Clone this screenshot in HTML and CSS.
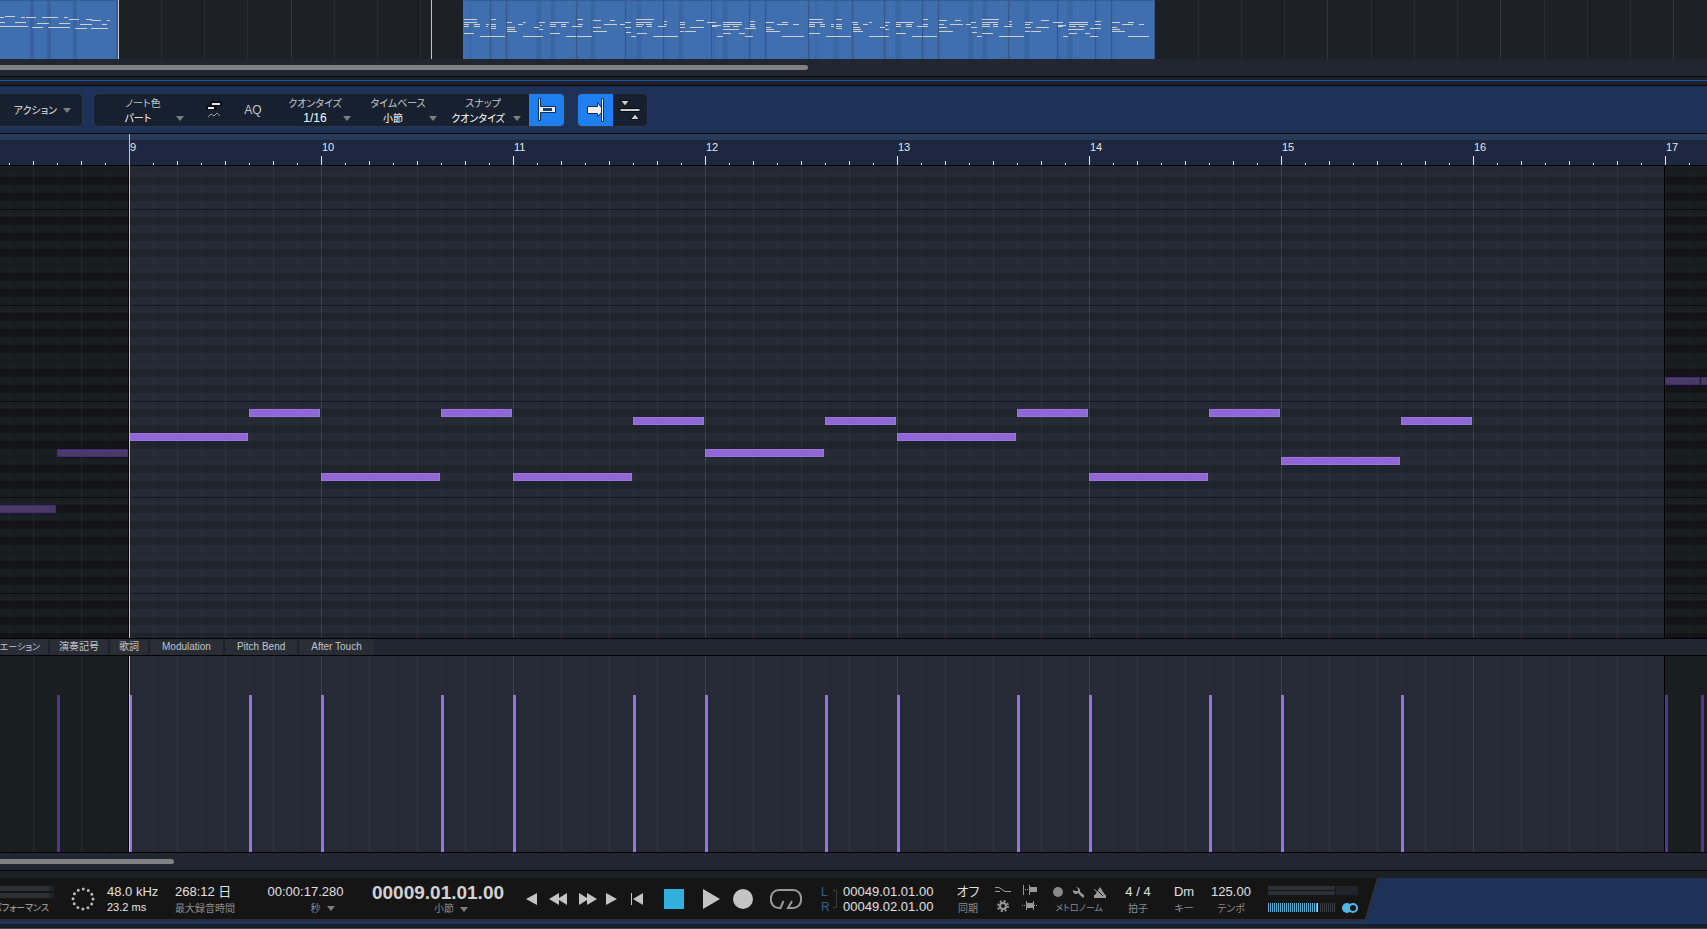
FILE: index.html
```html
<!DOCTYPE html>
<html lang="ja">
<head>
<meta charset="utf-8">
<title>ピアノロール</title>
<link rel="stylesheet" href="styles.css">
</head>
<body>
<section class="arrange" aria-label="アレンジ">
  <svg class="arrange-canvas" height="59" aria-hidden="true">
    <defs>
      <pattern id="beats" x="118" width="173" height="59" patternUnits="userSpaceOnUse">
        <path d="M43.5 0v59M86.5 0v59M129.5 0v59" stroke="#292c30"/><path d="M.5 0v59" stroke="#36383c"/>
      </pattern>
      <pattern id="beats-late" x="1154" width="173" height="59" patternUnits="userSpaceOnUse">
        <path d="M44.5 0v59M87.5 0v59M130.5 0v59" stroke="#292c30"/><path d="M.5 0v59" stroke="#36383c"/>
      </pattern>
    </defs>
    <rect width="600" height="59" fill="url(#beats)"/>
    <rect x="1150" width="100%" height="59" fill="url(#beats-late)"/>
    <rect width="118" height="59" fill="#406fb0"/>
    <path d="M32 0v59M49 0v59M75 0v59" stroke="#3863a0" stroke-width="4"/>
    <path d="M117 0v59" stroke="#355d96" stroke-width="2"/>
    <path d="M118.5 0v59M431.5 0v59" stroke="#c2c2c2"/>
    <rect x="463" width="692" height="59" fill="#406fb0"/>
    <path d="M470 0v59M491 0v59M507 0v59M577 0v59M626 0v59M631 0v59M664 0v59M714 0v59M750 0v59M766 0v59M809 0v59M816 0v59M853 0v59M885 0v59M923 0v59M939 0v59M1009 0v59M1058 0v59M1096 0v59M1112 0v59" stroke="#3c69a8" stroke-width="3"/>
    <path d="M539 0v59M553 0v59M593 0v59M639 0v59M681 0v59M725 0v59M836 0v59M898 0v59M971 0v59M985 0v59M1027 0v59M1070 0v59" stroke="#3a66a4" stroke-width="5"/>
    <path d="M490.5 0v59M506.5 0v59M576.5 0v59M625.5 0v59M663.5 0v59M711.5 0v59M749.5 0v59M765.5 0v59M808.5 0v59M852.5 0v59M884.5 0v59M922.5 0v59M938.5 0v59M1008.5 0v59M1057.5 0v59M1095.5 0v59M1111.5 0v59M1154.5 0v59" stroke="#355889"/>
    <path d="M0 .5h118M463 .5h692" stroke="#355d96"/>
    <g fill="none" stroke="#cfd0cc" stroke-width="3">
      <g transform="scale(.33333)">
        <path d="M15 49.5h30M0 52.5h12M63 52.5h12M78 52.5h30M126 52.5h48M192 52.5h12M207 58.5h30M258 58.5h18M273 61.5h30M321 61.5h9M0 67.5h15M45 67.5h33M111 70.5h36M177 70.5h33M240 73.5h36M306 73.5h15M0 79.5h84M96 82.5h33M144 82.5h66M225 85.5h36M273 85.5h51"/>
      </g>
      <g transform="translate(440) scale(.33333)">
        <path d="M72 58.5h39M153 58.5h15M411 58.5h18M588 58.5h54M459 61.5h24M510 61.5h15M768 61.5h24M672 64.5h9M930 64.5h15"/>
        <path d="M72 67.5h39M201 67.5h15M249 67.5h9M297 67.5h18M330 67.5h57M555 67.5h18M588 67.5h48M720 67.5h15M801 67.5h27M849 67.5h57M978 67.5h24M1026 67.5h18"/>
        <path d="M72 73.5h15M102 73.5h18M138 73.5h9M153 73.5h15M234 73.5h15M330 73.5h18M363 73.5h15M414 73.5h15M492 73.5h39M540 73.5h15M588 73.5h24M618 73.5h18M672 73.5h9M720 73.5h15M849 73.5h57M930 73.5h15M1011 73.5h33M1059 73.5h18"/>
        <path d="M300 76.5h6M816 76.5h27M72 79.5h15M102 79.5h18M138 79.5h6M153 79.5h15M330 79.5h18M363 79.5h15M396 79.5h30M588 79.5h18M621 79.5h15M654 79.5h24M816 79.5h15M849 79.5h21M879 79.5h18M930 79.5h15"/>
        <path d="M201 82.5h24M282 82.5h15M459 82.5h24M555 82.5h18M720 82.5h15M750 82.5h42M978 82.5h15M153 85.5h15M915 85.5h33M201 88.5h24M297 88.5h12M849 88.5h48M978 88.5h24"/>
        <path d="M201 94.5h30M459 94.5h42M720 94.5h12M735 94.5h33M978 94.5h42M558 97.5h15M72 100.5h30M330 100.5h30M591 100.5h30M849 100.5h24M897 100.5h18"/>
        <path d="M120 109.5h75M249 109.5h60M378 109.5h30M411 109.5h45M573 109.5h15M639 109.5h75M831 109.5h18M915 109.5h24M1026 109.5h66"/>
      </g>
      <g transform="translate(800) scale(.33333)">
        <path d="M27 58.5h42M108 58.5h18M369 58.5h15M546 58.5h51M417 61.5h24M465 61.5h18M723 61.5h24M627 64.5h9M885 64.5h18"/>
        <path d="M27 67.5h42M156 67.5h18M207 67.5h9M255 67.5h15M288 67.5h54M513 67.5h15M546 67.5h48M675 67.5h24M759 67.5h30M807 67.5h57M936 67.5h24M984 67.5h18"/>
        <path d="M27 73.5h18M60 73.5h15M93 73.5h9M108 73.5h18M159 73.5h15M189 73.5h15M288 73.5h15M318 73.5h18M369 73.5h15M417 73.5h15M450 73.5h39M498 73.5h15M546 73.5h24M579 73.5h15M627 73.5h9M675 73.5h15M807 73.5h57M885 73.5h18M966 73.5h33M1017 73.5h15"/>
        <path d="M255 76.5h9M774 76.5h24M27 79.5h18M60 79.5h15M93 79.5h9M108 79.5h18M288 79.5h15M318 79.5h18M351 79.5h33M546 79.5h24M579 79.5h15M612 79.5h24M774 79.5h15M807 79.5h21M837 79.5h18"/>
        <path d="M159 82.5h21M240 82.5h15M417 82.5h24M513 82.5h18M675 82.5h18M708 82.5h39M936 82.5h15M108 85.5h18M870 85.5h33M159 88.5h24M255 88.5h12M804 88.5h48M936 88.5h24"/>
        <path d="M159 94.5h30M417 94.5h42M675 94.5h15M693 94.5h30M936 94.5h39M516 97.5h15M27 100.5h33M288 100.5h30M546 100.5h33M807 100.5h24M855 100.5h15"/>
        <path d="M0 109.5h12M78 109.5h75M207 109.5h60M336 109.5h30M369 109.5h42M531 109.5h15M597 109.5h75M789 109.5h15M870 109.5h24M984 109.5h63"/>
      </g>
    </g>
  </svg>
  <div class="scrollbar"><div class="thumb thumb-arrange"></div></div>
</section>
<div class="splitter"></div>

<header class="toolbar">
  <div class="group group-action">
    <button class="action" type="button">アクション
      <svg class="caret" width="8" height="5" viewBox="0 0 8 5" aria-hidden="true"><path d="M0 0h8L4 5z"/></svg>
    </button>
  </div>
  <div class="group group-main">
    <div class="field">
      <label for="color">ノート色</label>
      <select id="color" class="value-left"><option>パート</option></select>
      <svg class="caret" width="8" height="5" viewBox="0 0 8 5" aria-hidden="true"><path d="M0 0h8L4 5z"/></svg>
    </div>
    <button class="tool" type="button" aria-label="ノート表示">
      <svg width="16" height="18" viewBox="0 0 16 18"><path d="M4 0h12v5h-5v4H0V4h4z" fill="#0b1018"/><path d="M6 3h8M2 7h6" stroke="#e4e4e4" stroke-width="2"/><path d="M2 16l3-3 3 2 3-3 3 3" fill="none" stroke="#9a9da0"/></svg>
    </button>
    <button class="tool aq" type="button">AQ</button>
    <div class="field">
      <label for="quantize">クオンタイズ</label>
      <select id="quantize" class="latin"><option>1/16</option></select>
      <svg class="caret" width="8" height="5" viewBox="0 0 8 5" aria-hidden="true"><path d="M0 0h8L4 5z"/></svg>
    </div>
    <div class="field field-left">
      <label for="timebase">タイムベース</label>
      <select id="timebase" class="value-left"><option>小節</option></select>
      <svg class="caret" width="8" height="5" viewBox="0 0 8 5" aria-hidden="true"><path d="M0 0h8L4 5z"/></svg>
    </div>
    <div class="field field-left">
      <label for="snap">スナップ</label>
      <select id="snap" class="value-left"><option>クオンタイズ</option></select>
      <svg class="caret" width="8" height="5" viewBox="0 0 8 5" aria-hidden="true"><path d="M0 0h8L4 5z"/></svg>
    </div>
    <button class="tool on" type="button" aria-label="スナップ切替">
      <svg width="20" height="26" viewBox="0 0 20 26"><path d="M1.500 1.500h2v8h15v6h-15v8h-2z" fill="#eee" stroke="#0d2c56"/><path d="M6 11h9v3H6z" fill="#0f3f70"/></svg>
    </button>
  </div>
  <div class="group group-scroll">
    <button class="tool on" type="button" aria-label="自動スクロール">
      <svg width="20" height="26" viewBox="0 0 20 26"><path d="M1.500 9.500h10v-4l4 5v-9h2v23h-2v-9l-4 4v-3h-10z" fill="#eee" stroke="#0d2c56"/><path d="M15.500 2v22" stroke="#0d2c56"/></svg>
    </button>
    <button class="tool" type="button" aria-label="ノート中央">
      <svg width="22" height="22" viewBox="0 0 22 22"><path d="M1.500 1.500h9L6 7zM11.500 20.500h9L16 15zM1 9.500h20v3H1z" fill="#ccc" stroke="#080b10"/></svg>
    </button>
  </div>
</header>

<section class="ruler" aria-label="ルーラー">
  <div class="bars"><span></span><span>9</span><span>10</span><span>11</span><span>12</span><span>13</span><span>14</span><span>15</span><span>16</span><span>17</span></div>
</section>

<main class="roll" aria-label="ノート">
  <div class="outside outside-before"></div><div class="outside outside-after"></div>
  <div class="beatlines"></div>
  <div class="notes">
    <i class="long dim r44 c6 tail"></i><i class="short dim r37 c6"></i>
    <i class="long r35 c9"></i><i class="short r32 c14"></i>
    <i class="long r40 c17"></i><i class="short r32 c22"></i>
    <i class="long r40 c25"></i><i class="short r33 c30"></i>
    <i class="long r37 c33"></i><i class="short r33 c38"></i>
    <i class="long r35 c41"></i><i class="short r32 c46"></i>
    <i class="long r40 c49"></i><i class="short r32 c54"></i>
    <i class="long r38 c57"></i><i class="short r33 c62"></i>
    <i class="dim split r28 c73"></i><i class="dim short push r28 c74"></i>
  </div>
  <div class="playhead"></div>
</main>

<nav class="lanes" aria-label="コントローラー">
  <button type="button" class="lane-first">リエーション</button><button type="button">演奏記号</button><button type="button">歌詞</button><button type="button" class="wide">Modulation</button><button type="button" class="wide">Pitch Bend</button><button type="button" class="wide">After Touch</button>
</nav>

<section class="velocity" aria-label="ベロシティ">
  <div class="outside outside-before"></div><div class="outside outside-after"></div>
  <div class="beatlines"></div>
  <div class="levels">
    <i class="dim c6"></i><i class="c9"></i><i class="c14"></i><i class="c17"></i><i class="c22"></i><i class="c25"></i><i class="c30"></i><i class="c33"></i><i class="c38"></i><i class="c41"></i><i class="c46"></i><i class="c49"></i><i class="c54"></i><i class="c57"></i><i class="c62"></i><i class="dim c73"></i><i class="dim push c74"></i>
  </div>
  <div class="playhead"></div>
</section>
<div class="scrollbar"><div class="thumb thumb-edit"></div></div>
<div class="grip"></div>

<footer class="transport">
  <svg class="slab-edge" width="20" height="43" viewBox="0 0 20 43" aria-hidden="true"><path d="M0 0h19L6 42H0z" fill="#151515"/><path d="M18 0L5.500 42H0" stroke="#2f3236" fill="none" stroke-width="2"/></svg>
  <div class="cell perf"><div class="meter"></div><div class="meter"></div><small>パフォーマンス</small></div>
  <div class="cell ring">
    <svg width="24" height="24" viewBox="0 0 24 24" aria-hidden="true"><circle cx="12" cy="12" r="10" fill="none" stroke="#b9b9b9" stroke-width="3" stroke-linecap="round" stroke-dasharray="0 5.236"/></svg>
  </div>
  <div class="cell left"><b>48.0 kHz</b><span class="ms">23.2 ms</span></div>
  <div class="cell left"><b>268:12 日</b><small>最大録音時間</small></div>
  <div class="cell"><b>00:00:17.280</b><small class="unit">秒 <svg class="caret" width="8" height="5" viewBox="0 0 8 5" aria-hidden="true"><path d="M0 0h8L4 5z"/></svg></small></div>
  <div class="cell"><b class="big">00009.01.01.00</b><small class="unit unit-bars">小節 <svg class="caret" width="8" height="5" viewBox="0 0 8 5" aria-hidden="true"><path d="M0 0h8L4 5z"/></svg></small></div>
  <div class="controls">
    <button type="button" aria-label="前へ"><svg width="11" height="12" viewBox="0 0 11 12"><path d="M11 0v12L0 6z"/></svg></button>
    <button type="button" aria-label="巻き戻し"><svg width="18" height="12" viewBox="0 0 18 12"><path d="M10 0v5L18 0v12l-8-5v5L0 6z"/></svg></button>
    <button type="button" aria-label="早送り"><svg width="18" height="12" viewBox="0 0 18 12"><path d="M0 0l8 5V0l10 6-10 6V7l-8 5z"/></svg></button>
    <button type="button" aria-label="次へ"><svg width="11" height="12" viewBox="0 0 11 12"><path d="M0 0v12L11 6z"/></svg></button>
    <button type="button" aria-label="先頭へ"><svg width="12" height="12" viewBox="0 0 12 12"><path d="M0 0h1v12H0zM12 0v12L2 6z"/></svg></button>
    <button type="button" aria-label="停止"><svg width="20" height="20" viewBox="0 0 20 20"><path d="M0 0h20v20H0z" fill="#30b0dc"/></svg></button>
    <button type="button" aria-label="再生"><svg width="17" height="20" viewBox="0 0 17 20"><path d="M0 0v20l17-10z"/></svg></button>
    <button type="button" aria-label="録音"><svg width="20" height="20" viewBox="0 0 20 20"><circle cx="10" cy="10" r="10"/></svg></button>
    <button type="button" aria-label="ループ"><svg width="32" height="20" viewBox="0 0 32 20"><path d="M9 19a8 8 0 0 1-8-9 8 8 0 0 1 8-9h14a8 8 0 0 1 8 9 8 8 0 0 1-8 9h-5l4-7M8 19h2.500l3-7" fill="none" stroke="#999" stroke-width="2"/></svg></button>
  </div>
  <div class="locators">
    <span class="lr">L</span><svg class="bracket" width="4" height="18" viewBox="0 0 4 18" aria-hidden="true"><path d="M0 .5h3.500v17H0" fill="none" stroke="#3a3d42"/></svg><b>00049.01.01.00</b>
    <span class="lr">R</span><b>00049.02.01.00</b>
  </div>
  <div class="cell"><b>オフ</b><small>同期</small></div>
  <div class="icons">
    <svg width="16" height="8" viewBox="0 0 16 8" aria-hidden="true"><path d="M0 1.500h4l6 4h6M0 5.500h5" fill="none" stroke="#999"/></svg>
    <svg width="16" height="10" viewBox="0 0 16 10" aria-hidden="true"><path d="M1.500 0v10M7.500 0v10" stroke="#999"/><path d="M8 2h7v5H8z" fill="#999"/><path d="M3 4.500h4" stroke="#999" stroke-dasharray="1 1"/></svg>
    <svg width="12" height="12" viewBox="0 0 12 12" aria-hidden="true"><circle cx="6" cy="6" r="3" fill="none" stroke="#999" stroke-width="2"/><circle cx="6" cy="6" r="5" fill="none" stroke="#999" stroke-width="2" stroke-dasharray="2 1.927"/></svg>
    <svg width="16" height="10" viewBox="0 0 16 10" aria-hidden="true"><path d="M4.500 0v9M11.500 0v9" stroke="#999"/><path d="M5 2h6v5H5z" fill="#999"/><path d="M0 4.500h4M12 4.500h4" stroke="#999" stroke-dasharray="1 1"/></svg>
  </div>
  <div class="cell metronome">
    <span class="metro-icons">
      <svg width="10" height="10" viewBox="0 0 10 10" aria-hidden="true"><circle cx="5" cy="5" r="5" fill="#888"/></svg>
      <svg width="11" height="11" viewBox="0 0 11 11" aria-hidden="true"><path d="M3 0l2 2v2H2L0 3a3 3 0 0 0 5 3l4 4a1 1 0 0 0 2-2L7 5a4 4 0 0 0-4-5z" fill="#999"/></svg>
      <svg width="12" height="11" viewBox="0 0 12 11" aria-hidden="true"><path d="M6 0l5 8h1v3H0V8h1z" fill="#999"/><path d="M1 1l8 8" stroke="#151515"/><path d="M0 2l6 6" stroke="#999"/></svg>
    </span>
    <small>メトロノーム</small>
  </div>
  <div class="cell"><b>4 / 4</b><small>拍子</small></div>
  <div class="cell"><b>Dm</b><small>キー</small></div>
  <div class="cell"><b>125.00</b><small>テンポ</small></div>
  <div class="output">
    <svg width="91" height="27" viewBox="0 0 91 27" aria-hidden="true">
      <path d="M0 0h67v4H0zM0 5h67v4H0z" fill="#2c3034"/><path d="M68 0h22v9H68z" fill="#20232a"/>
      <path d="M0 21.500h50" stroke="#58a9d4" stroke-width="9" stroke-dasharray="1 1"/>
      <path d="M49 17h1v9h-1z" fill="#c6c6c6"/>
      <path d="M52 21.500h15" stroke="#3a3e44" stroke-width="9" stroke-dasharray="1 1"/>
      <circle cx="79" cy="22" r="5" fill="#55b8e4"/><circle cx="85" cy="22" r="4" fill="#151515" stroke="#55b8e4" stroke-width="2"/>
    </svg>
  </div>
</footer>
<div class="bottom"></div>
</body>
</html>
```

FILE: styles.css
```css
* { box-sizing: border-box; }
body {
  margin: 0;
  height: 100vh;
  display: flex;
  flex-direction: column;
  overflow: hidden;
  background: #222630;
  color: #e6e6e6;
  font: 12px/16px "Liberation Sans", "Noto Sans CJK JP", sans-serif;
  font-feature-settings: "palt";
}
button, select { font: inherit; font-feature-settings: inherit; color: inherit; background: none; border: 0; padding: 0; margin: 0; }
svg { display: block; flex: none; }
.caret { fill: #7b7e83; }

.arrange, .splitter, .toolbar, .ruler, .lanes, .velocity, .scrollbar, .grip, .transport, .bottom { flex: none; }
.arrange { background: #1d2025; }
.arrange-canvas { width: 100%; }
.scrollbar { height: 17px; padding-top: 6px; background: #222630; }
.thumb { height: 5px; border-radius: 0 3px 3px 0; background: #818183; }
.thumb-arrange { width: 808px; }
.thumb-edit { width: 174px; }
.splitter { height: 10px; background: linear-gradient(#07080a 1px, #1e2126 1px 4px, #1f55b0 4px 5px, #1e2126 5px 9px, #07080a 9px); }

.toolbar { display: flex; align-items: center; height: 47px; background: #1e3158; }
.group { height: 34px; display: grid; background: #17202e; border: 1px solid #2c3748; border-radius: 5px; overflow: hidden; }
.group-action { width: 83px; border-left: 0; border-radius: 0 5px 5px 0; }
.group-main { margin-left: 10px; grid-template-columns: 98px 43px 36px 88px 86px 84px 35px; }
.group-scroll { margin-left: 12px; grid-template-columns: 35px 34px; }
.action { display: flex; align-items: center; justify-content: flex-end; gap: 6px; padding: 2px 11px 0 0; font-size: 10px; }
.tool { display: grid; place-items: center; }
.tool.on { background: #1e80f0; }
.aq { font-size: 12px; color: #c4c6c8; }
.field { position: relative; display: flex; flex-direction: column; padding-top: 2px; font-size: 10px; line-height: 15px; text-align: center; color: #fff; }
.field label { color: #c3c6ca; }
.field select { appearance: none; height: 15px; line-height: 15px; text-align: center; text-align-last: center; }
.field .latin { font-size: 12px; }
.field .value-left { padding-right: 10px; }
.field-left { padding-right: 8px; }
.field .caret { position: absolute; right: 8px; bottom: 5px; }

.ruler { position: relative; height: 33px; overflow: hidden; background: linear-gradient(#07080a 1px, #273a58 1px 7px, #1e2740 7px 32px, #020203 32px); }
.ruler::after { content: ""; position: absolute; left: 129px; top: 1px; bottom: 0; width: 1px; background: #c4c4c4; }
.bars {
  display: flex;
  height: 32px;
  margin-left: -63px;
  background:
    repeating-linear-gradient(90deg, #e8e8e8 0 1px, transparent 1px 192px) 0 23px / 100% 9px no-repeat,
    repeating-linear-gradient(90deg, #e8e8e8 0 1px, transparent 1px 48px) 0 28px / 100% 4px no-repeat,
    repeating-linear-gradient(90deg, #e8e8e8 0 1px, transparent 1px 24px) 0 30px / 100% 2px no-repeat;
}
.bars span { flex: none; width: 192px; padding: 6px 0 0 1px; font-size: 11px; line-height: 16px; }

.roll, .velocity { position: relative; overflow: hidden; border-bottom: 1px solid #020203; }
.roll {
  flex: 1;
  min-height: 0;
  background: repeating-linear-gradient(
    #14171e 0 1px, #262a34 1px 8px, #1f232c 8px 16px, #262a34 16px 24px, #1f232c 24px 32px,
    #262a34 32px 40px, #1f232c 40px 48px, #262a34 48px 56px, #20242d 56px 57px, #262a34 57px 64px,
    #1f232c 64px 72px, #262a34 72px 80px, #1f232c 80px 88px, #262a34 88px 96px) 0 -53px / 100% 1056px;
}
.velocity { height: 198px; border-top: 1px solid #020203; background: #262a34; }
.outside { position: absolute; top: 0; bottom: 0; }
.outside-before { left: 0; width: 129px; border-right: 1px solid #020203; }
.outside-after { left: 1664px; right: 0; border-left: 2px solid #000; }
.roll .outside {
  background: repeating-linear-gradient(
    #07090a 0 1px, #191e21 1px 8px, #131317 8px 16px, #191e21 16px 24px, #131317 24px 32px,
    #191e21 32px 40px, #131317 40px 48px, #191e21 48px 56px, #141719 56px 57px, #191e21 57px 64px,
    #131317 64px 72px, #191e21 72px 80px, #131317 80px 88px, #191e21 88px 96px) 0 -53px / 100% 1056px;
}
.velocity .outside { background: #191e21; }
.beatlines {
  position: absolute;
  inset: 0 0 0 -63px;
  background:
    repeating-linear-gradient(90deg, rgba(255,255,255,.06) 0 1px, transparent 1px 192px),
    repeating-linear-gradient(90deg, rgba(255,255,255,.04) 0 1px, transparent 1px 48px),
    repeating-linear-gradient(90deg, rgba(255,255,255,.02) 0 1px, transparent 1px 24px);
}
.notes, .levels { position: relative; display: grid; grid-template-columns: repeat(80, 24px); margin-left: -63px; }
.notes { grid-template-rows: repeat(60, 8px); margin-top: -5px; }
.notes i { height: 8px; background: #9068d6; border: 1px solid #9a74e2; }
.long { width: 119px; }
.short { width: 71px; }
.split { width: 35px; }
.notes .dim { background: #493a68; border-color: #46287c; }
.notes .tail { margin-left: -120px; }
.push { margin-left: 12px; }
.levels { height: 196px; align-items: end; }
.levels i { grid-row: 1; width: 3px; height: 157px; background: #976fe6; }
.levels .dim { background: #56309c; }
.playhead { position: absolute; top: 0; bottom: 0; left: 129px; width: 1px; background: #c4c4c4; }

.c6 { grid-column: 6; } .c9 { grid-column: 9; } .c14 { grid-column: 14; } .c17 { grid-column: 17; }
.c22 { grid-column: 22; } .c25 { grid-column: 25; } .c30 { grid-column: 30; } .c33 { grid-column: 33; }
.c38 { grid-column: 38; } .c41 { grid-column: 41; } .c46 { grid-column: 46; } .c49 { grid-column: 49; }
.c54 { grid-column: 54; } .c57 { grid-column: 57; } .c62 { grid-column: 62; } .c73 { grid-column: 73; } .c74 { grid-column: 74; }
.r28 { grid-row: 28; } .r32 { grid-row: 32; } .r33 { grid-row: 33; } .r35 { grid-row: 35; }
.r37 { grid-row: 37; } .r38 { grid-row: 38; } .r40 { grid-row: 40; } .r44 { grid-row: 44; }

.lanes { display: flex; height: 16px; background: #222631; }
.lanes button { padding: 0 9px; background: #292d35; border-right: 2px solid #1e2129; font-size: 10px; line-height: 16px; color: #c0c5cc; white-space: nowrap; }
.lanes .wide { padding: 0 12px; }
.lanes button:last-child { border-right: 0; }
.lanes .lane-first { display: flex; justify-content: flex-end; width: 50px; padding: 0 8px 0 0; font-size: 9px; }

.grip { height: 8px; background: linear-gradient(#07080a 1px, #1d2023 1px); }

.transport {
  position: relative;
  display: grid;
  grid-template-columns: 64px 43px 68px 78px 105px 160px 298px 134px 36px 62px 62px 56px 36px 58px 100px 1fr;
  height: 43px;
  background:
    linear-gradient(90deg, #2c2e31 1365px, #1e3158 1365px) bottom / 100% 2px no-repeat,
    linear-gradient(90deg, #151515 1360px, #1e3158 1360px);
  white-space: nowrap;
}
.slab-edge { position: absolute; left: 1360px; top: 0; }
.cell { display: flex; flex-direction: column; align-items: center; padding-top: 6px; }
.cell.left { align-items: flex-start; }
.transport b { font-weight: 400; font-size: 13px; line-height: 16px; color: #e0e0e0; }
.transport small { display: flex; align-items: center; gap: 6px; font-size: 10px; line-height: 17px; color: #8a8c8e; }
.transport .unit { padding-left: 34px; }
.transport .unit-bars { padding-left: 26px; line-height: 14px; }
.ms { font-size: 11px; line-height: 14px; }
.transport .big { font-size: 19px; line-height: 18px; font-weight: 700; color: #d2d2d2; }
.perf { align-items: flex-end; padding: 8px 10px 0 0; gap: 2px; }
.transport .perf small { margin-right: 5px; font-size: 9px; line-height: 16px; color: #b0b2b4; }
.meter { width: 100%; height: 5px; background: linear-gradient(90deg, #2c3034 49px, #212427 49px); }
.ring { padding: 9px 0 0; align-items: flex-start; }
.ring svg { margin-left: 7px; }
.controls { display: grid; grid-template-columns: 27px 26px 34px 13px 38px 36px 38px 26px 60px; height: 41px; fill: #c4c4c4; }
.controls button { display: grid; place-items: center; }
.locators { display: grid; grid-template-columns: 12px 10px 1fr; grid-template-rows: 15px 15px; padding: 6px 0 0 5px; align-items: center; align-content: start; }
.transport .lr { color: #306296; font-size: 12px; }
.bracket { grid-row: 1 / 3; grid-column: 2; }
.locators b { grid-column: 3; }
.icons { display: grid; grid-template-columns: 26px 18px; grid-template-rows: 12px 14px; gap: 3px 5px; padding: 6px 0 0 4px; place-items: center; align-content: start; justify-content: start; }
.metro-icons { display: flex; gap: 10px; align-items: center; height: 16px; }
.transport .metronome small { font-size: 9px; }
.output { padding: 8px 0 0 8px; }
.bottom { height: 8px; background: linear-gradient(#1e3560 3px, #181f2b 3px 7px, #40444e 7px); }
```
